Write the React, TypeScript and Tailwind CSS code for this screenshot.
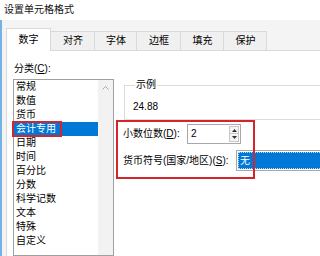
import type { ReactNode } from 'react'

const font = { fontFamily: '"Liberation Sans", "Noto Sans CJK SC", sans-serif' }

const tabs = ['数字', '对齐', '字体', '边框', '填充', '保护']
const tabWidths = ['w-[45px]', 'w-[45px]', 'w-[43px]', 'w-[45px]', 'w-[44px]', 'w-[44px]']

const categories = ['常规', '数值', '货币', '会计专用', '日期', '时间', '百分比', '分数', '科学记数', '文本', '特殊', '自定义']

function Key({ children }: { children: ReactNode }) {
  return <span className="underline underline-offset-[1px]">{children}</span>
}

function Triangle({ up }: { up?: boolean }) {
  return (
    <svg width="5" height="3" viewBox="0 0 5 3" className="block">
      <polygon points={up ? '0,3 5,3 2.5,0' : '0,0 5,0 2.5,3'} fill="#333" />
    </svg>
  )
}

export default function App() {
  return (
    <div className="flex h-[256px] w-full min-w-[300px] flex-col overflow-hidden bg-white text-[10px] leading-[14px] text-black" style={font}>
      {/* title bar */}
      <div className="flex h-[20px] shrink-0 items-center pl-[4px] text-[10px] text-[#111]">设置单元格格式</div>

      <div className="flex min-h-0 flex-1">
        <div className="w-[2px] shrink-0 bg-[#74b2e6]" />

        <div className="flex min-w-0 flex-1 flex-col overflow-hidden bg-[#f4f4f4] pl-[4px] pt-[8px]">
          {/* tabs */}
          <div className="flex h-[22px] shrink-0 items-end">
            {tabs.map((t, i) =>
              i === 0 ? (
                <div
                  key={t}
                  className={`${tabWidths[i]} relative -mb-px flex h-[23px] items-center justify-center border border-b-0 border-[#d9d9d9] bg-white`}
                >
                  {t}
                </div>
              ) : (
                <div
                  key={t}
                  className={`${tabWidths[i]} -ml-px flex h-[19px] items-center justify-center border border-b-0 border-[#d9d9d9] bg-[#f0f0f0] pl-px`}
                >
                  {t}
                </div>
              ),
            )}
          </div>

          {/* tab page */}
          <div className="flex min-h-0 flex-1 border-l border-t border-[#d9d9d9] bg-white">
            {/* category list */}
            <div className="flex w-[108px] shrink-0 flex-col pl-[6px] pt-[11px]">
              <div className="pl-px">
                分类(<Key>C</Key>):
              </div>
              <div className="mt-[3px] flex w-[101px] flex-1 border border-[#a0a0a0]">
                <div className="flex w-[84px] flex-col">
                  {categories.map((c) =>
                    c === '会计专用' ? (
                      <div key={c} className="relative flex h-[14px] items-center bg-[#0078d7] pl-[2px] text-white">
                        {c}
                        <div className="absolute left-[-2px] top-[-1px] h-[16px] w-[50px] border-2 border-[#d4252e]" />
                      </div>
                    ) : (
                      <div key={c} className="flex h-[14px] items-center pl-[2px]">
                        {c}
                      </div>
                    ),
                  )}
                </div>
                <div className="flex w-[15px] justify-center bg-[#f2f2f2] pt-[6px]">
                  <svg width="7" height="4" viewBox="0 0 7 4">
                    <polyline points="0.5,3.5 3.5,0.5 6.5,3.5" fill="none" stroke="#a6a6a6" strokeWidth="1" />
                  </svg>
                </div>
              </div>
            </div>

            {/* right side */}
            <div className="flex min-w-0 flex-1 flex-col overflow-hidden">
              <fieldset className="ml-[9px] mt-[27px] w-[400px] shrink-0 border border-r-0 border-[#dcdcdc] pb-[5px] pl-[8px] pt-[8px]">
                <legend className="ml-[2px] px-px leading-[14px]">示例</legend>
                <div>24.88</div>
              </fieldset>

              <div className="relative flex flex-col pl-[8px] pt-[4px]">
                <div className="flex h-[20px] items-center">
                  <div className="w-[64px] shrink-0 whitespace-nowrap">
                    小数位数(<Key>D</Key>):
                  </div>
                  <div className="flex h-[20px] w-[54px] shrink-0 items-center border border-[#a8a8a8] pl-[3px] pr-[1px]">
                    <span className="flex-1">2</span>
                    <div className="flex flex-col">
                      <div className="flex h-[8px] w-[10px] items-center justify-center border border-[#c8c8c8] bg-[#f4f4f4]">
                        <Triangle up />
                      </div>
                      <div className="flex h-[8px] w-[10px] items-center justify-center border border-t-0 border-[#c8c8c8] bg-[#f4f4f4]">
                        <Triangle />
                      </div>
                    </div>
                  </div>
                </div>

                <div className="mt-[6px] flex h-[21px] items-center">
                  <div className="w-[113px] shrink-0 whitespace-nowrap">
                    货币符号(国家/地区)(<Key>S</Key>):
                  </div>
                  <div className="h-[21px] w-[300px] shrink-0 border border-r-0 border-[#a8a8a8] py-px pl-px">
                    <div className="flex h-full items-center border border-r-0 border-dotted border-[#b9d8f2] bg-[#0078d7] pl-px text-white">
                      无
                    </div>
                  </div>
                </div>

                <div className="pointer-events-none absolute left-px top-0 h-[59px] w-[139px] border-2 border-[#d4252e]" />
              </div>
            </div>
          </div>
        </div>
      </div>
    </div>
  )
}
